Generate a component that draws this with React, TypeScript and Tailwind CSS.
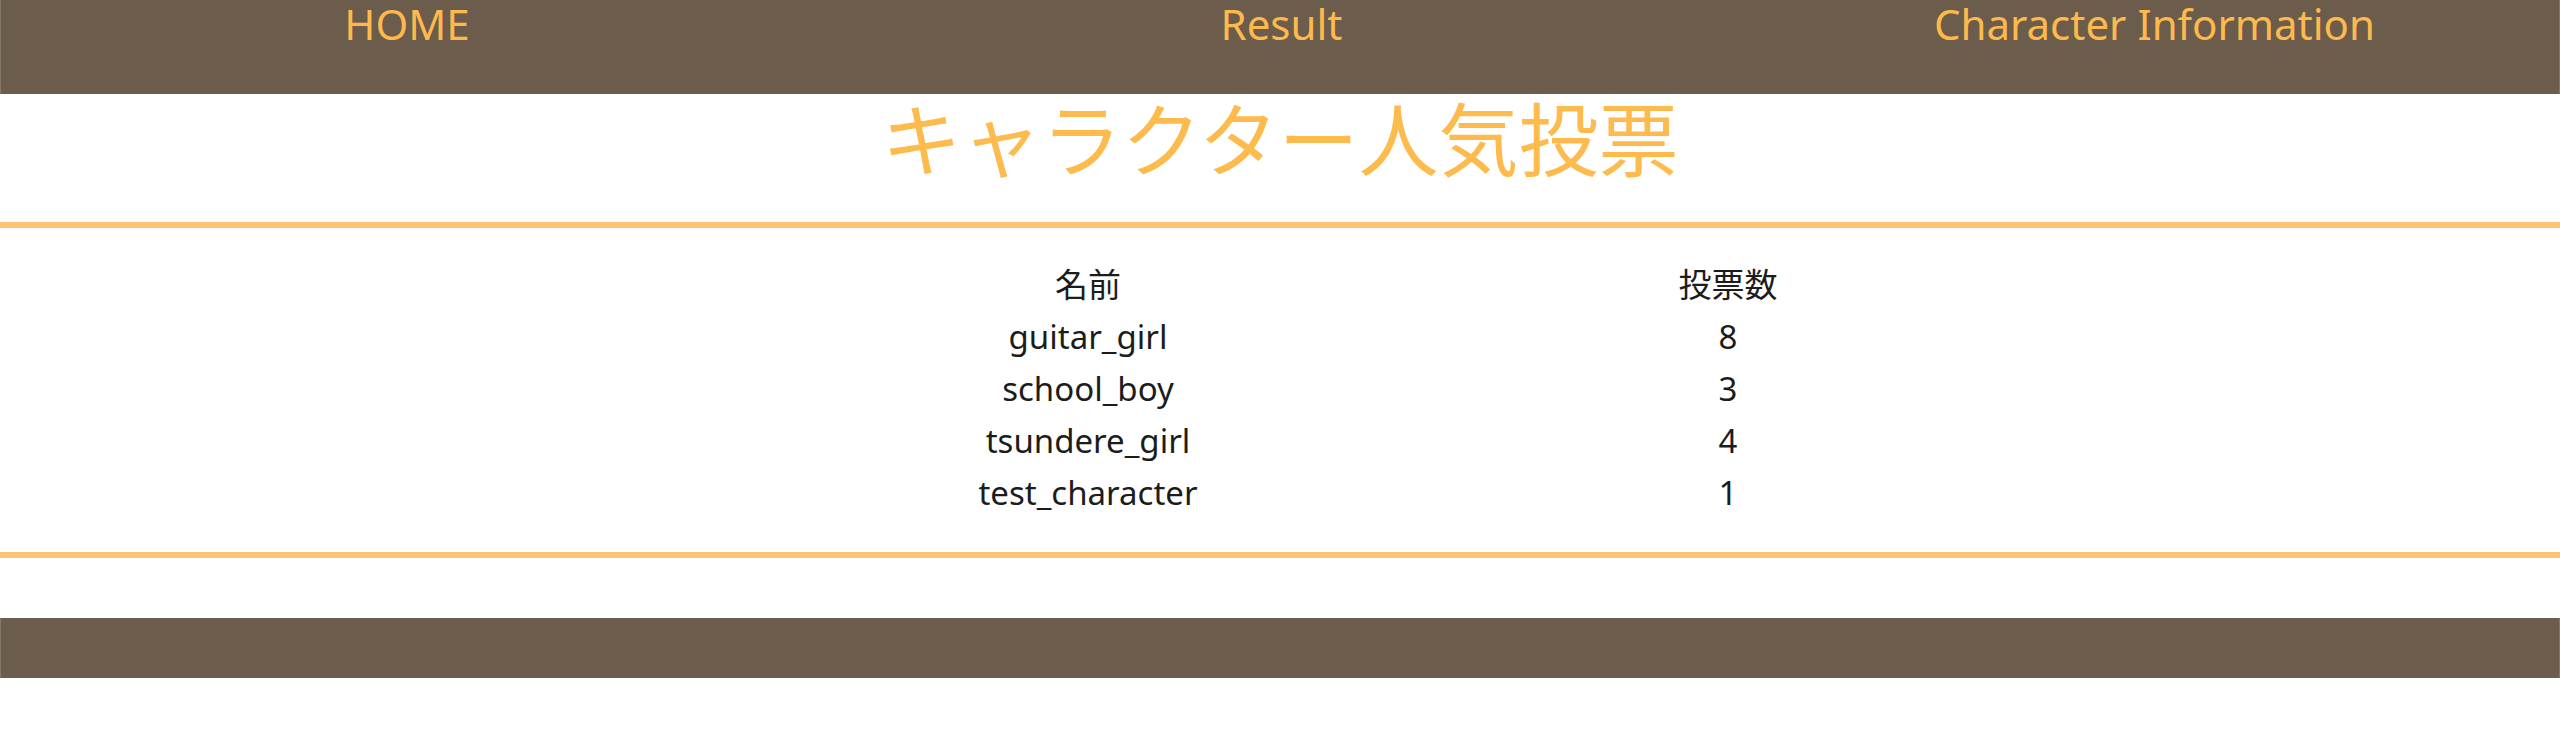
import React from "react"

const navItems = ["HOME", "Result", "Character Information"]

const votes = [
  { name: "guitar_girl", count: 8 },
  { name: "school_boy", count: 3 },
  { name: "tsundere_girl", count: 4 },
  { name: "test_character", count: 1 },
]

export default function App() {
  return (
    <div className="min-h-[754px] bg-white font-['Noto_Sans','Noto_Sans_CJK_JP',sans-serif]">
      {/* header nav */}
      <header className="h-[94px] border-x border-[#85786b] bg-[#6b5c4c]">
        <nav className="grid grid-cols-[812px_937px_1fr]">
          {navItems.map((item) => (
            <a key={item} className="text-center text-[42px] leading-[48px] text-[#fdb94b]">
              {item}
            </a>
          ))}
        </nav>
      </header>

      <h1 className="mt-[1px] text-center font-['Noto_Sans_CJK_JP',sans-serif] text-[80px] leading-none font-normal text-[#fdbb4e]">
        キャラクター人気投票
      </h1>

      <div className="mt-[47px] h-[6px] bg-[#fec474]" />

      {/* result table */}
      <div className="mx-auto mt-[31px] grid w-1/2 grid-cols-[7fr_3fr] text-[33px] leading-[52px] text-[#1c1c1c]">
        <div className="text-center">名前</div>
        <div className="text-center">投票数</div>
        {votes.map((v) => (
          <React.Fragment key={v.name}>
            <div className="text-center">{v.name}</div>
            <div className="text-center">{v.count}</div>
          </React.Fragment>
        ))}
      </div>

      <div className="mt-[33px] h-[6px] bg-[#fec474]" />

      <footer className="mt-[60px] h-[60px] border-x border-[#85786b] bg-[#6b5c4c]" />
    </div>
  )
}
